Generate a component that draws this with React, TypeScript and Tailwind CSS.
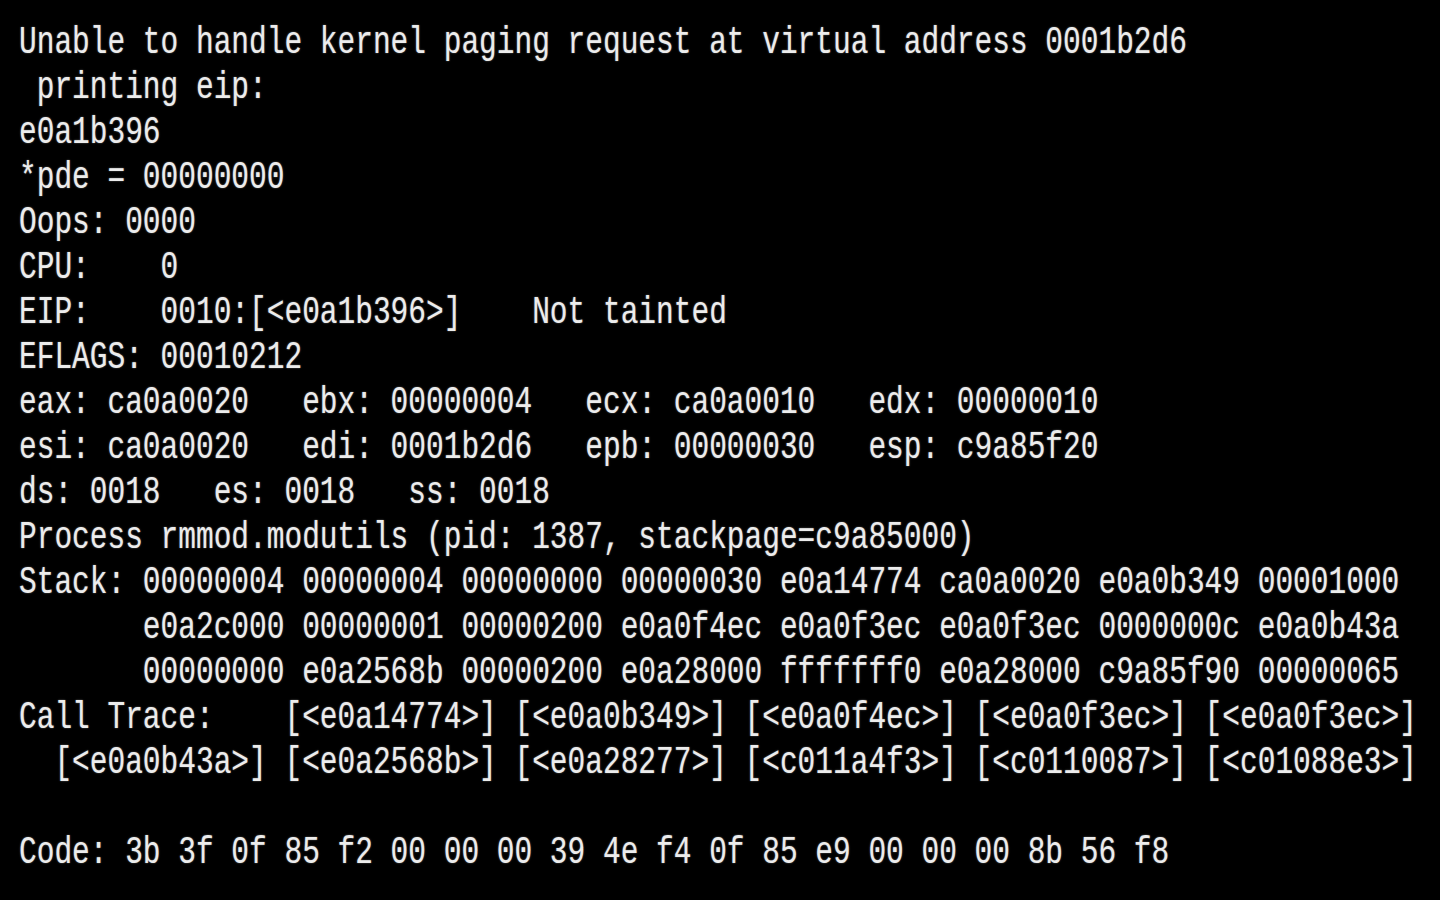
import React from "react";

const lines = [
  "Unable to handle kernel paging request at virtual address 0001b2d6",
  " printing eip:",
  "e0a1b396",
  "*pde = 00000000",
  "Oops: 0000",
  "CPU:    0",
  "EIP:    0010:[<e0a1b396>]    Not tainted",
  "EFLAGS: 00010212",
  "eax: ca0a0020   ebx: 00000004   ecx: ca0a0010   edx: 00000010",
  "esi: ca0a0020   edi: 0001b2d6   epb: 00000030   esp: c9a85f20",
  "ds: 0018   es: 0018   ss: 0018",
  "Process rmmod.modutils (pid: 1387, stackpage=c9a85000)",
  "Stack: 00000004 00000004 00000000 00000030 e0a14774 ca0a0020 e0a0b349 00001000",
  "       e0a2c000 00000001 00000200 e0a0f4ec e0a0f3ec e0a0f3ec 0000000c e0a0b43a",
  "       00000000 e0a2568b 00000200 e0a28000 fffffff0 e0a28000 c9a85f90 00000065",
  "Call Trace:    [<e0a14774>] [<e0a0b349>] [<e0a0f4ec>] [<e0a0f3ec>] [<e0a0f3ec>]",
  "  [<e0a0b43a>] [<e0a2568b>] [<e0a28277>] [<c011a4f3>] [<c0110087>] [<c01088e3>]",
  "",
  "Code: 3b 3f 0f 85 f2 00 00 00 39 4e f4 0f 85 e9 00 00 00 8b 56 f8",
];

const App = () => {
  return (
    <main className="w-full h-screen bg-black overflow-hidden pl-[19px] pt-[20px]">
      <div className="origin-top-left scale-x-[0.776] font-['Liberation_Mono',monospace] text-[38px] leading-[45px] text-[#ececec] [text-shadow:0_0_2px_rgba(255,255,255,0.45)]">
        {lines.map((line, i) => (
          <div key={i} className="whitespace-pre h-[45px]">
            {line}
          </div>
        ))}
      </div>
    </main>
  );
};

export default App;
